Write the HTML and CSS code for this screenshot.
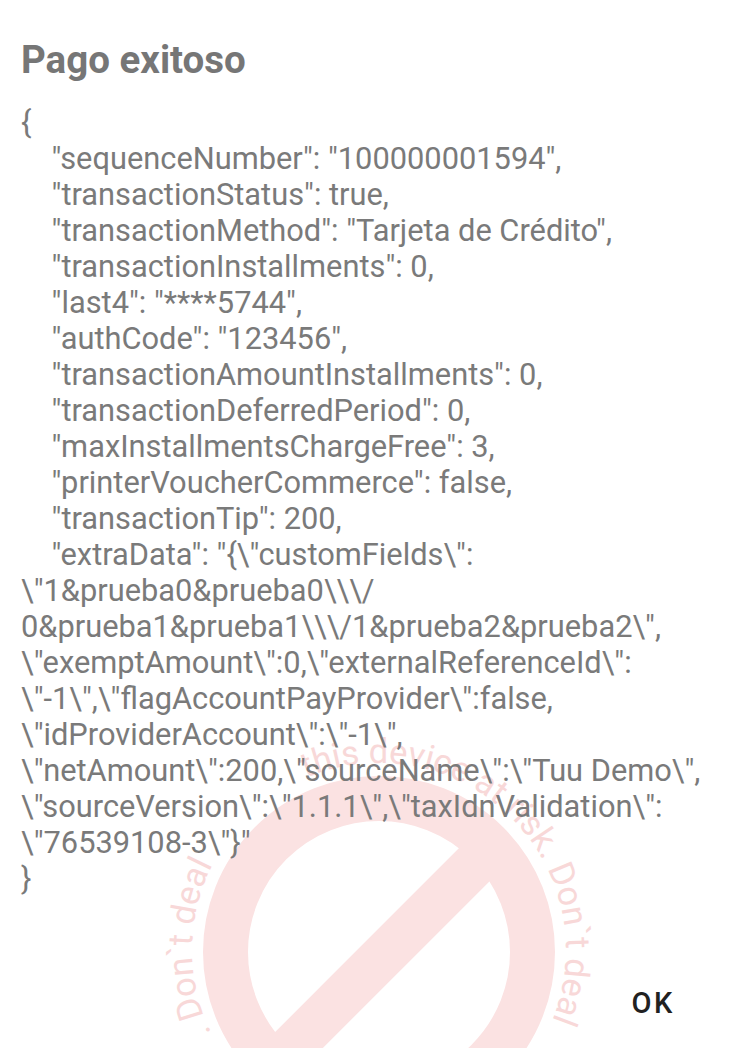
FILE: index.html
```html
<!DOCTYPE html>
<html lang="es">

<head>
    <meta charset="UTF-8">
    <meta name="viewport" content="width=device-width, initial-scale=1.0">
    <title>Pago exitoso</title>
    <link rel="stylesheet" href="styles.css">
</head>

<body>
    <div class="dialog">
        <svg class="watermark" viewBox="0 0 756 1048" aria-hidden="true">
            <defs>
                <path id="stampPath" d="M 379 1137 A 187 187 0 1 1 379 763 A 187 187 0 1 1 379 1137" />
            </defs>
            <circle class="stamp-ring" cx="379" cy="952" r="153.5" />
            <line class="stamp-slash" x1="491" y1="848" x2="275" y2="1064" />
            <text class="stamp-text">
                <textPath href="#stampPath" startOffset="208">. Don`t deal</textPath>
            </text>
            <text class="stamp-text">
                <textPath href="#stampPath" startOffset="512">this device at risk. Don`t deal</textPath>
            </text>
        </svg>

        <h1 class="title">Pago exitoso</h1>
<pre class="message">{
    "sequenceNumber": "100000001594",
    "transactionStatus": true,
    "transactionMethod": "Tarjeta de Crédito",
    "transactionInstallments": 0,
    "last4": "****5744",
    "authCode": "123456",
    "transactionAmountInstallments": 0,
    "transactionDeferredPeriod": 0,
    "maxInstallmentsChargeFree": 3,
    "printerVoucherCommerce": false,
    "transactionTip": 200,
    "extraData": "{\"customFields\":
\"1&amp;prueba0&amp;prueba0\\\/
0&amp;prueba1&amp;prueba1\\\/1&amp;prueba2&amp;prueba2\",
\"exemptAmount\":0,\"externalReferenceId\":
\"-1\",\"flagAccountPayProvider\":false,
\"idProviderAccount\":\"-1\",
\"netAmount\":200,\"sourceName\":\"Tuu Demo\",
\"sourceVersion\":\"1.1.1\",\"taxIdnValidation\":
\"76539108-3\"}"
}</pre>
        <div class="actions">
            <button class="ok-button">OK</button>
        </div>
    </div>
</body>

</html>
```

FILE: styles.css
```css
body {
    margin: 0;
    background-color: #ffffff;
    font-family: Roboto, 'Liberation Sans', sans-serif;
}

.dialog {
    position: relative;
    height: 1048px;
    box-sizing: border-box;
    padding: 37px 0 0 21px;
    display: flex;
    flex-direction: column;
    overflow: hidden;
}

/* sello rosado detras del texto */
.watermark {
    position: absolute;
    left: 0;
    top: 0;
    width: 756px;
    height: 1048px;
}

.stamp-ring {
    fill: none;
    stroke: #fbe2e2;
    stroke-width: 45;
}

.stamp-slash {
    stroke: #fbe2e2;
    stroke-width: 45;
}

.stamp-text {
    fill: #f8d8d8;
    font-family: Roboto, 'Liberation Sans', sans-serif;
    font-size: 34.5px;
}

.title {
    position: relative;
    margin: 0;
    font-size: 38.5px;
    line-height: 45px;
    font-weight: 700;
    color: #767676;
}

.message {
    position: relative;
    margin: 23px 0 0 0;
    font-family: Roboto, 'Liberation Sans', sans-serif;
    font-size: 30.8px;
    line-height: 36px;
    color: #7a7a7a;
    white-space: pre;
}

.actions {
    position: relative;
    margin-top: auto;
    display: flex;
    justify-content: flex-end;
    padding: 0 81px 28px 0;
}

.ok-button {
    padding: 0;
    border: none;
    background: none;
    font-family: Roboto, 'Liberation Sans', sans-serif;
    font-size: 29px;
    line-height: 34px;
    font-weight: 500;
    letter-spacing: 0.09em;
    color: #212121;
}
```
